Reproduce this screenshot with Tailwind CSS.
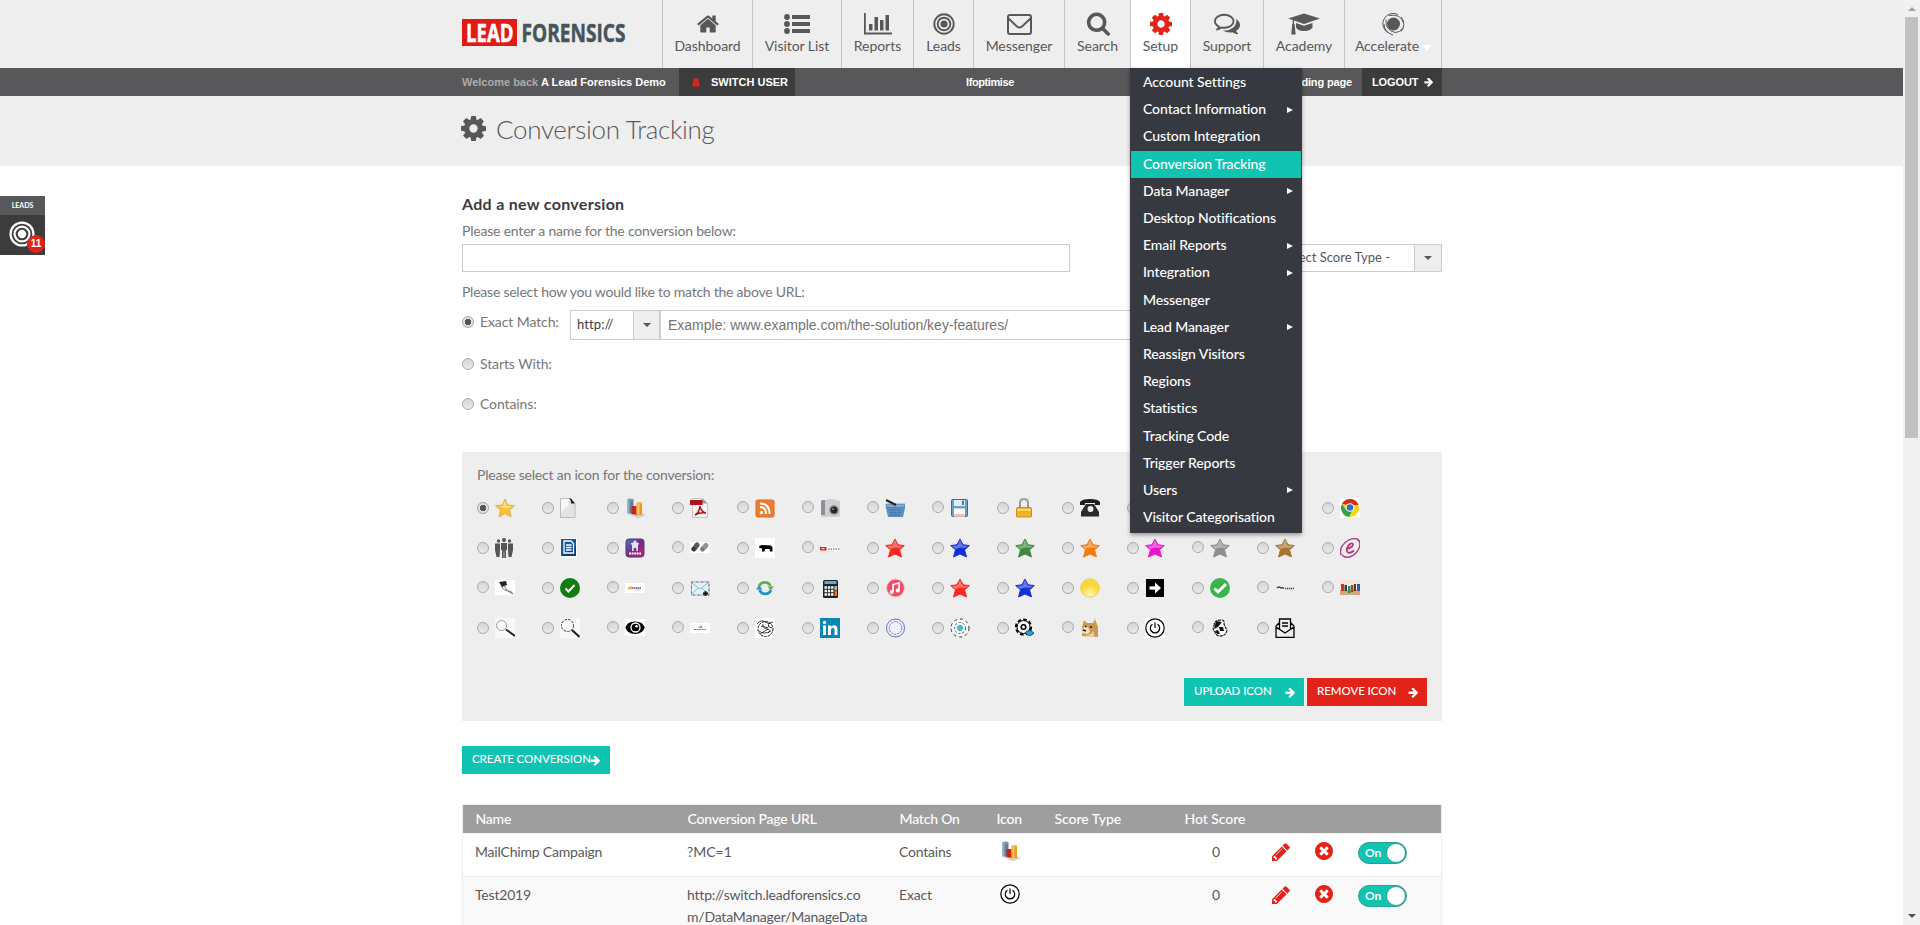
<!DOCTYPE html>
<html lang="en">
<head>
<meta charset="utf-8">
<title>Conversion Tracking</title>
<script src="https://cdn.jsdelivr.net/npm/@tailwindcss/browser@4"></script>
</head>
<body class="bg-white h-[925px] overflow-hidden font-['Lato',sans-serif] text-sm text-[#58585a]">
<svg class="hidden">
  <symbol id="cog" viewBox="128 128 1536 1536"><path d="M1152 896q0-106-75-181t-181-75-181 75-75 181 75 181 181 75 181-75 75-181zm512-109v222q0 12-8 23t-20 13l-185 28q-19 54-39 91 35 50 107 138 10 12 10 25t-9 23q-27 37-99 108t-94 71q-12 0-26-9l-138-108q-44 23-91 38-16 136-29 186-7 28-36 28h-222q-14 0-24.500-8.500t-11.500-21.500l-28-184q-49-16-90-37l-141 107q-10 9-25 9-14 0-25-11-126-114-165-168-7-10-7-23 0-12 8-23 15-21 51-66.500t54-70.500q-27-50-41-99l-183-27q-13-2-21-12.500t-8-23.500v-222q0-12 8-23t19-13l186-28q14-46 39-92-40-57-107-138-10-12-10-24 0-10 9-23 26-36 98.500-107.500t94.500-71.500q13 0 26 10l138 107q44-23 91-38 16-136 29-186 7-28 36-28h222q14 0 24.500 8.500t11.500 21.500l28 184q49 16 90 37l142-107q9-9 24-9 13 0 25 10 129 119 165 170 7 8 7 22 0 12-8 23-15 21-51 66.500t-54 70.500q26 50 41 98l183 28q13 2 21 12.500t8 23.500z"/></symbol>
  <symbol id="arrow" viewBox="64 250 1536 1500"><path d="M1600 960q0 54-37 91l-651 651q-39 37-91 37-51 0-90-37l-75-75q-38-38-38-91t38-91l293-293h-704q-52 0-84.500-37.500t-32.500-90.500v-128q0-53 32.500-90.500t84.500-37.500h704l-293-294q-38-36-38-90t38-90l75-75q38-38 90-38 53 0 91 38l651 651q37 35 37 90z"/></symbol>
  <symbol id="pencil" viewBox="128 128 1536 1536"><path d="M491 1536l91-91-235-235-91 91v107h128v128h107zm523-928q0-22-22-22-10 0-17 7l-542 542q-7 7-7 17 0 22 22 22 10 0 17-7l542-542q7-7 7-17zm-54-192l416 416-832 832h-416v-416zm683 96q0 53-37 90l-166 166-416-416 166-165q36-38 90-38 53 0 91 38l235 234q37 39 37 91z"/></symbol>
  <symbol id="times" viewBox="128 128 1536 1536"><path d="M1277 1122q0-26-19-45l-181-181 181-181q19-19 19-45 0-27-19-46l-90-90q-19-19-46-19-26 0-45 19l-181 181-181-181q-19-19-45-19-27 0-46 19l-90 90q-19 19-19 46 0 26 19 45l181 181-181 181q-19 19-19 45 0 27 19 46l90 90q19 19 46 19 26 0 45-19l181-181 181 181q19 19 45 19 27 0 46-19l90-90q19-19 19-46zm387-226q0 209-103 385.500t-279.500 279.500-385.500 103-385.500-103-279.500-279.500-103-385.500 103-385.500 279.500-279.500 385.500-103 385.500 103 279.500 279.500 103 385.500z"/></symbol>
  <symbol id="target" viewBox="0 0 22 22"><g fill="none" stroke="currentColor" stroke-width="1.900"><circle cx="11" cy="11" r="9.700"/><circle cx="11" cy="11" r="6.300"/></g><circle cx="11" cy="11" r="3.600" fill="currentColor"/></symbol>
  <symbol id="bars3d" viewBox="0 0 20 20"><path d="M2 15l8-2 10 4-7 3z" fill="#d5dbe3" stroke="#a9b4c2" stroke-width=".5"/><path d="M2.500 1.500h6v14.500l-6-1z" fill="#5f8298"/><path d="M2.500 1.500h2v14l-2-.500z" fill="#8fb0c4"/><ellipse cx="5.500" cy="1.700" rx="3" ry="1.100" fill="#7fa0b4"/><path d="M6.500 8h5v9l-5-1z" fill="#c8231a"/><path d="M11.500 5h5.500v12l-5.500 1z" fill="#f0961e"/><path d="M12.500 5.500h2v12h-2z" fill="#fbc860"/><ellipse cx="14.200" cy="5" rx="2.800" ry="1" fill="#f7b54a"/></symbol>
  <symbol id="power" viewBox="0 0 20 20"><path d="M0 0h20v20H0z" fill="#fff"/><g fill="none" stroke="#000" stroke-width="1.200"><circle cx="10" cy="10" r="9.200"/><path d="M7.500 6.200a4.700 4.700 0 1 0 5 0M10 4.500v5.500"/></g></symbol>
  <symbol id="star" viewBox="0 0 20 20"><path d="M10 1l3 5.800 6.300.8-4.800 4.300 2 7L10 16 3.500 19l2-7.200L.7 7.600 7 6.800z" stroke="currentColor" stroke-width="1" stroke-linejoin="round"/><path d="M10 1.500l2.500 6 5.500.6-3.500 2q-5-1.500-9 1L2 8l5.500-.6z" fill="#fff" opacity=".35"/></symbol>
</svg>

<div class="flex h-[925px] w-[1920px] overflow-hidden">
<main class="relative w-[1903px] h-[925px] overflow-hidden">
  <header class="bg-[#eee] h-[68px]">
    <div class="ml-[462px] w-[980px] flex h-full">
      <div class="w-[200px] pt-[19px]">
        <svg class="w-[170px] h-[28px] overflow-visible" viewBox="0 0 170 28" font-family="'Open Sans','Noto Sans',sans-serif" font-weight="700">
          <rect width="55" height="27" fill="#e31b18"/>
          <text x="4" y="22.500" font-size="25" fill="#fff" stroke="#fff" stroke-width=".5" textLength="47.500" lengthAdjust="spacingAndGlyphs">LEAD</text>
          <text x="59.500" y="22.500" font-size="25" fill="#475459" stroke="#475459" stroke-width=".5" textLength="104" lengthAdjust="spacingAndGlyphs">FORENSICS</text>
        </svg>
      </div>
      <nav class="flex text-[#58585a] tracking-[-0.05px] [&>a]:border-l [&>a]:border-[#c4c4c4] [&>a]:flex [&>a]:flex-col [&>a]:items-center [&>a]:pt-3 [&>a]:leading-5 [&_svg]:h-6">
        <a class="w-[90px]"><svg class="w-6" viewBox="0 0 1792 1792" fill="currentColor"><path d="M1472 992v480q0 26-19 45t-45 19h-384v-384h-256v384h-384q-26 0-45-19t-19-45v-480q0-1 .5-3t.5-3l575-474 575 474q1 2 1 6zm223-69l-62 74q-8 9-21 11h-3q-13 0-21-7l-692-577-692 577q-12 8-24 7-13-2-21-11l-62-74q-8-10-7-23.500t11-21.500l719-599q32-26 76-26t76 26l244 204v-195q0-14 9-23t23-9h192q14 0 23 9t9 23v408l219 182q10 8 11 21.500t-7 23.500z"/></svg><span>Dashboard</span></a>
        <a class="w-[89px]"><svg class="w-[26px]" viewBox="0 0 26 24" fill="currentColor"><circle cx="3" cy="5" r="2.900"/><circle cx="3" cy="12" r="2.900"/><circle cx="3" cy="19" r="2.900"/><path d="M8 3h18v4H8zM8 10h18v4H8zM8 17h18v4H8z"/></svg><span>Visitor List</span></a>
        <a class="w-[72px]"><svg class="w-7" viewBox="0 0 28 24" fill="currentColor"><path d="M0 1h1.800v19.500H28v2H0zM5 12h3.500v6.500H5zM10.500 5H14v13.500h-3.500zM16 8h3.500v10.500H16zM21.500 3H25v15.500h-3.500z"/></svg><span>Reports</span></a>
        <a class="w-[60px]"><svg class="w-[22px]"><use href="#target"/></svg><span>Leads</span></a>
        <a class="w-[91px]"><svg class="w-[25px]" viewBox="0 0 25 24" fill="none" stroke="currentColor" stroke-width="2"><rect x="1" y="3" width="23" height="19" rx="2"/><path d="M1.500 6.500l8.500 8q2.500 2 5 0l8.500-8"/></svg><span>Messenger</span></a>
        <a class="w-[66px]"><svg class="w-6" viewBox="0 120 1728 1664" fill="currentColor"><path d="M1216 832q0-185-131.500-316.500t-316.500-131.500-316.500 131.500-131.500 316.500 131.500 316.500 316.500 131.500 316.500-131.500 131.500-316.500zm512 832q0 52-38 90t-90 38q-54 0-90-38l-343-342q-179 124-399 124-143 0-273.500-55.500t-225-150-150-225-55.500-273.500 55.500-273.500 150-225 225-150 273.500-55.500 273.500 55.500 225 150 150 225 55.500 273.500q0 220-124 399l343 343q37 37 37 90z"/></svg><span>Search</span></a>
        <a class="w-[60px] bg-white"><svg class="w-[22px]" fill="#e2231a"><use href="#cog"/></svg><span>Setup</span></a>
        <a class="w-[73px]"><svg class="w-[26px]" viewBox="0 130 1792 1650" fill="currentColor"><path d="M704 384q-153 0-286 52t-211.500 141-78.500 191q0 82 53 158t149 132l97 56-35 84q34-20 62-39l44-31 53 10q78 14 153 14 153 0 286-52t211.500-141 78.500-191-78.500-191-211.500-141-286-52zm0-128q191 0 353.500 68.500t256.500 186.500 94 257-94 257-256.500 186.500-353.500 68.500q-86 0-176-16-124 88-278 128-36 9-86 16h-3q-11 0-20.500-8t-11.500-21q-1-3-1-6.500t.5-6.500 2-6l2.500-5 3.500-5.500 4-5 4.500-5 4-4.500q5-6 23-25t26-29.500 22.500-29 25-38.500 20.500-44q-124-72-195-177t-71-224q0-139 94-257t256.500-186.500 353.500-68.500zm822 1169q10 24 20.500 44t25 38.500 22.500 29 26 29.500 23 25q1 1 4 4.500t4.500 5 4 5 3.500 5.500l2.500 5 2 6 .5 6.500-1 6.500q-3 14-13 22t-22 7q-50-7-86-16-154-40-278-128-90 16-176 16-271 0-472-132 58 4 88 4 161 0 309-45t264-129q125-92 192-212t67-254q0-77-23-152 129 71 204 178t75 230q0 120-71 224.500t-195 176.500z"/></svg><span>Support</span></a>
        <a class="w-[81px]"><svg class="w-8" viewBox="0 0 32 24" fill="currentColor"><path d="M16 1.500L32 6.500 16 12 6 8.500v3q1.300 1 .8 2.500l.9 8.500H3.200L4.100 14q-.6-1.500.6-2.600V8L0 6.500zM8 11l8 2.700L24.500 11v4.500Q22 19 16 19t-8-3.500z"/></svg><span>Academy</span></a>
        <a class="w-[98px] border-r"><svg class="w-6" viewBox="0 0 24 24"><circle cx="12.500" cy="12" r="6.500" fill="currentColor"/><path d="M17 2.500A10.500 10.500 0 0 0 3 7 10 10 0 0 0 7 20.500M20 5a10.500 10.500 0 0 1 0 14.500M8 3.500Q20 1.500 22.500 11M5 7.500Q4 18 14 20.500q5 .5 8-5M3 12q0 8 9 11" fill="none" stroke="currentColor" stroke-width="1"/></svg>
          <span class="flex items-center gap-1"><span>Accelerate</span><i class="mt-1 border-x-[4px] border-t-[6px] border-x-transparent border-t-white"></i></span></a>
      </nav>
    </div>
  </header>

  <div class="h-7 bg-[#58585a] text-white font-bold text-[11px] leading-7 font-['Liberation_Sans',sans-serif]">
    <div class="ml-[462px] w-[980px] flex h-full">
      <div class="w-[217px]"><span class="text-[#acacac]">Welcome back</span> A Lead Forensics Demo</div>
      <div class="w-[116px] bg-[#3c3c3c] flex items-center pl-[13px]"><svg class="w-[8px] h-[9px] mr-[11px]" viewBox="0 0 8 10" fill="#e2231a"><circle cx="4" cy="2.500" r="2.500"/><path d="M0 8q0-4 2-4 2 1.500 4 0 2 0 2 4 0 1.500-1.500 1.500h-5Q0 9.500 0 8z"/></svg><span>SWITCH USER</span></div>
      <div class="flex-1 flex justify-between pl-[171px] pr-[10px] tracking-[-0.4px]"><span>lfoptimise</span><span class="tracking-[-0.15px]">landing page</span></div>
      <div class="w-[80px] bg-[#3c3c3c] flex items-center pl-[10px] gap-[6px] tracking-[-0.1px]"><span>LOGOUT</span><svg class="w-[9px] h-[9px]" fill="#fff"><use href="#arrow"/></svg></div>
    </div>
  </div>

  <div class="h-[70px] bg-[#eee]">
    <div class="ml-[461px] flex items-center h-[68px]">
      <svg class="w-[25px] h-[25px] mr-[10px] -mt-1" fill="#58585a"><use href="#cog"/></svg>
      <h1 class="text-[26px] font-light tracking-[-0.32px]">Conversion Tracking</h1>
    </div>
  </div>

  <section class="ml-[462px] w-[980px] text-[#777] tracking-[-0.2px]">
    <h2 class="pt-[27px] text-base leading-[22px] font-bold text-[#3c3c3c] tracking-[0.3px]">Add a new conversion</h2>
    <p class="mt-1.5 leading-5">Please enter a name for the conversion below:</p>
    <div class="mt-[3px] flex justify-between">
      <div class="w-[608px] h-7 border border-[#ccc]"></div>
      <div class="w-[180px] h-7 border border-[#ccc] flex text-[13px] leading-[25px] tracking-[0px] text-[#58585a]">
        <span class="flex-1 text-right pr-[24px]">- Select Score Type -</span>
        <span class="w-[27px] bg-[#eee] border-l border-[#ccc] flex items-center justify-center"><i class="border-x-[4px] border-t-[4px] border-x-transparent border-t-[#58585a]"></i></span>
      </div>
    </div>
    <p class="mt-[10px] leading-5 tracking-[-0.24px]">Please select how you would like to match the above URL:</p>
    <div class="mt-2 h-[30px] flex">
      <div class="w-[108px] flex items-center h-6 tracking-[-0.1px]"><i class="size-3 rounded-full border border-[#a3a3a3] bg-[radial-gradient(circle,#555_0_3px,#e2e2e2_3.5px)] mr-1.5"></i>Exact Match:</div>
      <div class="w-[90px] border border-[#ccc] flex text-[13px] leading-[26px] tracking-[0.1px] text-[#3c3c3c]">
        <span class="flex-1 pl-[6px]">http://</span>
        <span class="w-[26px] bg-[#eee] border-l border-[#ccc] flex items-center justify-center"><i class="border-x-[4px] border-t-[4px] border-x-transparent border-t-[#58585a]"></i></span>
      </div>
      <div class="flex-1 mr-[260px] border border-[#ccc] pl-[7px] leading-[29px] tracking-[0px] font-['Liberation_Sans',sans-serif] text-[#757575]">Example: www.example.com/the-solution/key-features/</div>
    </div>
    <div class="mt-[14px] h-5 flex items-center tracking-[-0.1px]"><i class="size-3 rounded-full border border-[#a9a9a9] bg-linear-to-b from-[#d6d6d6] to-[#e8e8e8] mr-1.5"></i>Starts With:</div>
    <div class="mt-5 h-5 flex items-center tracking-[-0.1px]"><i class="size-3 rounded-full border border-[#a9a9a9] bg-linear-to-b from-[#d6d6d6] to-[#e8e8e8] mr-1.5"></i>Contains:</div>

    <div class="mt-[38px] h-[269px] bg-[#eee] pl-[15px] pr-[15px]">
      <p class="pt-[13px] leading-5">Please select an icon for the conversion:</p>
      <div id="icons" class="mt-[3px] grid grid-cols-[repeat(14,65px)] auto-rows-[40px]"></div>
      <div class="mt-[30px] flex justify-end gap-[3px] text-white text-[11.5px] leading-[26px] font-medium tracking-[-0.05px]">
        <a class="w-[120px] h-7 bg-[#11c4b2] pl-[10px] pr-[9px] flex justify-between">UPLOAD ICON<svg class="w-[10px] h-[10px] mt-[10px]" fill="#fff"><use href="#arrow"/></svg></a>
        <a class="w-[120px] h-7 bg-[#e2231a] pl-[10px] pr-[9px] flex justify-between">REMOVE ICON<svg class="w-[10px] h-[10px] mt-[10px]" fill="#fff"><use href="#arrow"/></svg></a>
      </div>
    </div>

    <a class="mt-[25px] w-[148px] h-7 bg-[#11c4b2] pl-[10px] pr-[10px] flex justify-between text-white text-[11.5px] leading-[26px] font-medium tracking-[-0.05px] whitespace-nowrap"><span class="w-[118px]">CREATE CONVERSION</span><svg class="w-[10px] h-[10px] mt-[10px]" fill="#fff"><use href="#arrow"/></svg></a>

    <div class="mt-[30px] border border-[#eee] text-[#58585a] leading-[22px]">
      <div class="grid grid-cols-[212px_212px_97px_58px_130px_1fr] h-7 bg-[#9e9e9e] text-white font-medium leading-[27px] pl-[12.5px]">
        <span>Name</span><span>Conversion Page URL</span><span>Match On</span><span>Icon</span><span class="tracking-[-0.05px]">Score Type</span><span class="tracking-[-0.05px]">Hot Score</span>
      </div>
      <div class="grid grid-cols-[212px_212px_101px_54px_130px_82px_42px_43px_1fr] h-[43px] border-t border-[#eee] pl-3 pt-[7px]">
        <span>MailChimp Campaign</span><span class="tracking-[0px]">?MC=1</span><span>Contains</span>
        <svg class="size-5"><use href="#bars3d"/></svg><span></span><span class="pl-[28px]">0</span>
        <svg class="w-[18px] h-[18px] mt-0.5 ml-[6px]" fill="#e2231a"><use href="#pencil"/></svg>
        <svg class="w-[18px] h-[18px] ml-[7px] mt-px" fill="#e2231a"><use href="#times"/></svg>
        <span class="ml-[7px] w-[49px] h-[22px] rounded-full bg-[#11c4b2] border border-[#2f9e92] flex items-center justify-between text-white text-xs font-bold pl-1.5 mt-px">On<i class="size-[20px] rounded-full bg-white border border-[#2f9e92]"></i></span>
      </div>
      <div class="grid grid-cols-[212px_212px_101px_54px_130px_82px_42px_43px_1fr] h-[80px] border-t border-[#eee] bg-[#faf9fa] pl-3 pt-[7px]">
        <span>Test2019</span><span>http://switch.leadforensics.co<br>m/DataManager/ManageData</span><span>Exact</span>
        <svg class="size-5"><use href="#power"/></svg><span></span><span class="pl-[28px]">0</span>
        <svg class="w-[18px] h-[18px] mt-0.5 ml-[6px]" fill="#e2231a"><use href="#pencil"/></svg>
        <svg class="w-[18px] h-[18px] ml-[7px] mt-px" fill="#e2231a"><use href="#times"/></svg>
        <span class="ml-[7px] w-[49px] h-[22px] rounded-full bg-[#11c4b2] border border-[#2f9e92] flex items-center justify-between text-white text-xs font-bold pl-1.5 mt-px">On<i class="size-[20px] rounded-full bg-white border border-[#2f9e92]"></i></span>
      </div>
    </div>
  </section>

  <div class="absolute left-[1130px] top-[68px] w-[172px] h-[465px] bg-[#373940] shadow-[0_2px_4px_rgba(0,0,0,0.35)] p-px text-white font-medium">
    <ul id="menu" class="leading-[25px] tracking-[-0.08px]"></ul>
  </div>

  <aside class="absolute left-0 top-[196px] w-[45px] h-[59px] bg-[#3c3c3c] text-white text-center">
    <div class="bg-[#58585a] h-[19px] text-[7px] leading-[18px] font-bold">LEADS</div>
    <svg class="absolute left-[9px] top-[25px] w-[26px] h-[26px]"><use href="#target"/></svg>
    <b class="absolute left-[27px] top-[39px] size-[18px] rounded-full bg-[#e2231a] text-[10px] leading-[18px] font-['Liberation_Sans',sans-serif]">11</b>
  </aside>
</main>
<div class="w-[17px] h-full bg-[#f1f1f1] flex flex-col items-center">
  <i class="mt-[7px] border-x-[4px] border-b-[4px] border-x-transparent border-b-[#a3a3a3]"></i>
  <div class="mt-[6px] w-[13px] h-[421px] bg-[#c1c1c1]"></div>
  <i class="mt-auto mb-[7px] border-x-[4px] border-t-[4px] border-x-transparent border-t-[#505050]"></i>
</div>
</div>

<script>
const star = c => `<use href="#star" fill="${c}" color="${c}"/>`;
const white = (y, h) => `<rect y="${y}" width="20" height="${h}" fill="#fff"/>`;
const icons = [
 `<path d="M10 1l2.800 6 6.700.7-5 4.500 1.500 6.800-6-3.500L4 19l1.500-6.800-5-4.500L7.200 7z" fill="#fbc02d" stroke="#e8a33d" stroke-width=".8"/><path d="M10 3l2 5 5 .5-6 2-8-2L8 8z" fill="#fde08a"/>`,
 `<path d="M.5.5h10l4.500 5v14H.5z" fill="#e4e4e4" stroke="#a8a8a8" stroke-width=".7"/><path d="M1 1h8v6L1 14z" fill="#f7f7f7"/><path d="M9 .5h2l4 5H11q0-4-2-5z" fill="#222"/>`,
 `<use href="#bars3d"/>`,
 `<path d="M2.500.5h10l5 5v14h-15z" fill="#f4f4f4" stroke="#bbb" stroke-width=".8"/><path d="M12 .5v5h5.500z" fill="#9a9a9a"/><path d="M0 2h12.500v5H0z" fill="#b01218"/><path d="M5 17q4-2 5-9 1 6 6 7-6-1-11 2z" fill="none" stroke="#b01218" stroke-width="1.500"/>`,
 `<rect x="1" y="2" width="18" height="17" rx="1.500" fill="#ee7b31" stroke="#dd6a20"/><path d="M5 9q6 0 6 7M5 5.500q9.500 0 9.500 10.500" fill="none" stroke="#fff" stroke-width="2"/><circle cx="6.500" cy="14.500" r="1.700" fill="#fff"/>`,
 `<path d="M1 4q0-2 2-2h4l1-1h6l1 1q5 0 5 2v13q0 2-2 2H1z" fill="#cfcfd3"/><path d="M1 4q0-2 2-2h2v15H1z" fill="#8e8e96"/><circle cx="14" cy="12" r="5" fill="#9a9aa0"/><circle cx="14" cy="12" r="3.500" fill="#26262c"/><circle cx="13" cy="11" r="1" fill="#888"/>`,
 `<path d="M1 6h19v4l-2 9H3L1 10z" fill="#5b8fc4"/><path d="M1 6h19v3.500H1z" fill="#7fa9d0" stroke="#456f9a" stroke-width=".6"/><path d="M5 12h11M5.500 14.500h10M6 17h9" stroke="#2f5680" stroke-dasharray="1 1.300"/><path d="M1 2l10 5" stroke="#222" stroke-width="2"/>`,
 `<rect x="1.500" y="1.500" width="16" height="17" rx="1" fill="#6aa2c6" stroke="#39708f"/><path d="M4 2h11v6H4z" fill="#e3ecf2"/><path d="M4 10.500h11v8H4z" fill="#fff"/><path d="M4 16h11v2.500H4z" fill="#f2c4ae"/><path d="M12 2.500h2V7h-2z" fill="#4b7f9f"/>`,
 `<path d="M5 10V5q0-4 4-4t4 4v5" fill="none" stroke="#9b9b9b" stroke-width="2"/><rect x="1.500" y="9.500" width="15" height="9.500" rx="1" fill="#f0b323" stroke="#b77d0c" stroke-width=".8"/><path d="M2 11h14v2H2z" fill="#fbd869"/>`,
 `<path d="M0 7V4q2-3 10-3t10 3v3h-5V5H5v2z" fill="#1e1e1e"/><path d="M6 6h8l5 8v4.500H1V14z" fill="#2b2b2b"/><circle cx="10.500" cy="11" r="3" fill="#eee"/>`,
 ``,``,``,
 `${white(0,20)}<circle cx="10" cy="10" r="9" fill="#fdd516"/><path d="M2 6a9 9 0 0 1 16.500 1H10z" fill="#dd2a1d"/><path d="M2 6a9 9 0 0 0 7 13l3-6-6-1z" fill="#31a24c"/><circle cx="10" cy="9.500" r="4.200" fill="#fff"/><circle cx="10" cy="9.500" r="3.300" fill="#2d71c4"/>`,
 `<g fill="#555"><circle cx="9" cy="2" r="2"/><circle cx="3.500" cy="3" r="1.700"/><circle cx="14.500" cy="3" r="1.700"/><path d="M6 5h6v7h-1v8H9.300v-7h-.6v7H7v-8H6zM0 5.500h5V12l-.5 7H1.500L0 12zM13 5.500h5V12l-1.500 7h-3L13 12z"/></g>`,
 `<path d="M0 0h17v20H0z" fill="#fff"/><path d="M1 1h15v17H1z" fill="#0c3c7c"/><path d="M1 1h15v8L1 18z" fill="#1d6ab0" opacity=".6"/><path d="M4 3h7l2.500 2.500V15H4zM6 7h5.500M6 9.500h5.500M6 12h5.500" fill="none" stroke="#fff" stroke-width="1.300"/>`,
 `<linearGradient id="ga" x2="1" y2="1"><stop stop-color="#3f7fc0"/><stop offset=".5" stop-color="#7b2a8a"/><stop offset="1" stop-color="#d6246a"/></linearGradient><rect x="1" y="1" width="18" height="18" rx="3" fill="url(#ga)" stroke="#54306e"/><path d="M10 2l2.500 3H14v1.500h-1v6.500h-1.700v-3H8.700v3H7V6.500H6V5h1.500z" fill="#dfe3f2"/><path d="M4 15.500h12" stroke="#fff" stroke-width="1.800" stroke-dasharray="2 .6"/>`,
 `${white(4,11)}<g stroke-width="5" stroke-linecap="round"><path d="M4 11l3-4" stroke="#555c66"/><path d="M12.500 11l3.500-3.500" stroke="#8d949c"/></g><circle cx="3.500" cy="11" r="2" fill="#333"/><circle cx="12.500" cy="11.500" r="1.800" fill="#777"/>`,
 `${white(0,20)}<path d="M4 8l3-1 9 .5 1.500 2v4h-2.500l-.5-2.500H10L9.500 13.500H7L7 10.500 4.500 10z" fill="#000"/>`,
 `${white(9,4)}<rect y="9" width="6.500" height="3.500" fill="#d91f1f"/><path d="M1.500 10.700h3" stroke="#fff"/><path d="M8 11h12" stroke="#444" stroke-width="1" stroke-dasharray="1.500 1"/>`,
 star('#f9281c'),star('#1330d8'),star('#3f8a3f'),star('#f47a10'),star('#ee12cf'),star('#8e8e8e'),star('#a87432'),
 `<g fill="none" stroke="#b5387e"><path d="M1 17C-2 7 10-1 17 1c6 3 2 13-5 17-4 2-8 1-10-1" stroke-width="1.400"/><path d="M7 11q6-2 6-4.500-.5-2-3-.5-4 4-3 7.500 2 3 7-1" stroke-width="1.800"/></g>`,
 `${white(2,15)}<path d="M4 4l7-1 1 4-5 2z" fill="#222"/><path d="M6 8q3 5 7 5t5 3M9 7q2 6 9 9" stroke="#777" fill="none"/>`,
 `<circle cx="10" cy="10" r="10" fill="#107c10"/><path d="M5.500 10.500l3 3 6-6.500" fill="none" stroke="#fff" stroke-width="2"/>`,
 `${white(5,10)}<path d="M2 10l5-2-1 3z" fill="#f2a61f"/><path d="M3 10.500h4" stroke="#e8b02d" stroke-width="1.500"/><path d="M7 10h9" stroke="#555" stroke-width="1.500" stroke-dasharray="1.500 .5"/><path d="M9 12h6" stroke="#bbb" stroke-width=".8"/>`,
 `<rect x="1.500" y="4" width="17.500" height="13" fill="#dff3f6" stroke="#8fb3cc"/><rect x="1.500" y="4" width="17.500" height="13" fill="none" stroke="#b0405a" stroke-dasharray="1.500 3.500"/><path d="M2 5l8 6 8-6M2 16l6-6M18 16l-6-6" fill="none" stroke="#79aeb8" stroke-width=".8"/><path d="M13 15.500h5M15.500 13v5" stroke="#111" stroke-width="1.800"/>`,
 `<path d="M4 8.500A6.200 6.200 0 0 1 15.500 8" fill="none" stroke="#62b04a" stroke-width="2.600"/><path d="M12.500 8.500h6.500l-3.500 4z" fill="#62b04a"/><path d="M16 12A6.200 6.200 0 0 1 4.500 12" fill="none" stroke="#1e8fd0" stroke-width="2.600"/><path d="M1 11.500h6.500l-3.500-4z" fill="#1e8fd0"/>`,
 `<rect x="3" y="2" width="15" height="18" rx="1.500" fill="#222"/><path d="M4.500 3h12v3h-12z" fill="#4ab1e6"/><path d="M4.500 9.500h9M4.500 13h9M4.500 16.500h9" stroke="#fff" stroke-width="2.400" stroke-dasharray="2.400 .9"/><path d="M14.500 8h2.500v4h-2.500z" fill="#bbb"/><path d="M14.500 12.500h2.500v5.500h-2.500z" fill="#f07818"/>`,
 `<circle cx="10.500" cy="10" r="9" fill="#ee4d6b" stroke="#f7c9d2"/><path d="M8 14V6.500l6-1.500v7.500" fill="none" stroke="#fff" stroke-width="1.600"/><circle cx="6.700" cy="14" r="2" fill="#fff"/><circle cx="12.700" cy="12.500" r="2" fill="#fff"/>`,
 star('#f9281c'),star('#1330d8'),
 `<radialGradient id="gb" cy=".85"><stop stop-color="#fff6b8"/><stop offset="1" stop-color="#f8d93c"/></radialGradient><circle cx="10" cy="10" r="9.300" fill="url(#gb)" stroke="#e8c840" stroke-width=".8"/>`,
 `<rect x="1" y="1" width="18" height="18" fill="#000"/><path d="M4.500 10h8" stroke="#fff" stroke-width="3.200"/><path d="M10 4.500l6 5.500-6 5.500z" fill="#fff"/>`,
 `<circle cx="10" cy="10" r="10" fill="#3bb54a"/><path d="M4.500 10.500l3.500 3.500 8-8" fill="none" stroke="#fff" stroke-width="3"/>`,
 `<path d="M2 10q2-2 4 0h3" stroke="#444" fill="none" stroke-width="1.300"/><path d="M10 10.500h9" stroke="#444" stroke-width="1.500" stroke-dasharray="1.300 .7"/>`,
 `${white(2,15)}<path d="M0 2h20v6H0z" fill="#f3e6d8"/><path d="M0 12h20v5H0z" fill="#d3a77c"/><path d="M1 6h3v7H1zM11 7h2.500v7H11z" fill="#c4352b"/><path d="M4.500 7H7v6H4.500zM14 6h2v7h-2z" fill="#44362c"/><path d="M8 8h2.500v7H8z" fill="#1d9458"/><path d="M17 6h3v7h-3z" fill="#3556a0"/>`,
 `<rect width="20" height="20" fill="#f8f8f8"/><circle cx="6.500" cy="7.500" r="5" fill="#fff" stroke="#999"/><path d="M11 11.500l9 6.500" stroke="#222" stroke-width="2"/>`,
 `<rect width="20" height="20" fill="#f8f8f8"/><circle cx="7.500" cy="7.500" r="6" fill="#fff" stroke="#333" stroke-dasharray="2.500 1"/><path d="M12 12l7.500 7" stroke="#222" stroke-width="2.200"/>`,
 `${white(1,17)}<path d="M.5 9.500Q2 3.500 10 3.500T19.700 9.500Q18 16 10 16T.5 9.500z" fill="#000"/><circle cx="10.500" cy="9.500" r="4.500" fill="none" stroke="#fff" stroke-width="1.300"/><circle cx="11.500" cy="8.300" r="1.300" fill="#fff"/>`,
 `${white(5,10)}<path d="M8 10l3-3 2 3z" fill="#7fa9cc"/><path d="M4 11.500h12" stroke="#4f83b4" stroke-dasharray="2 .6"/>`,
 `${white(0,20)}<g fill="none" stroke="#111"><circle cx="10.500" cy="11" r="7.500" stroke-dasharray="2.500 1"/><path d="M2 6q4-5 8-2t8 0M6 9q2-2 4 0t4-1M4 13q5 4 12 0M8 6q-1 4 4 5t1 4M14 5q-2 4 3 5M5 16l8-5" stroke-width=".8"/></g>`,
 `<rect width="20" height="20" fill="#0a86b5"/><path d="M3 7.500h3V17H3zM8 7.500h3v1.300Q12 7.300 14 7.300q3.500 0 3.500 4V17h-3v-5q0-2.200-1.600-2.200Q11 9.800 11 12v5H8z" fill="#fff"/><circle cx="4.500" cy="4.500" r="1.700" fill="#fff"/>`,
 `<g fill="#f1f1fb" stroke="#6670b8"><circle cx="10.500" cy="10" r="9"/><circle cx="10.500" cy="10" r="6.300" stroke-dasharray="2 1"/></g>`,
 `<circle cx="10" cy="10" r="9" fill="#f3fafa" stroke="#333" stroke-dasharray="3 3"/><circle cx="10" cy="10" r="5.500" fill="none" stroke="#355" stroke-dasharray="2 2"/><circle cx="10" cy="10" r="2.700" fill="#3cc3cf" stroke="#177" stroke-dasharray="1 1"/>`,
 `<circle cx="8.500" cy="9" r="7.500" fill="none" stroke="#000" stroke-width="2.200" stroke-dasharray="3.500 2.300"/><circle cx="8.500" cy="9" r="6.500" fill="#f4f4f4" stroke="#000"/><circle cx="8.500" cy="9" r="2.300" fill="none" stroke="#000" stroke-width="1.500"/><path d="M10 15q4-5 9 0-4 5-9 0z" fill="#1aa7ea" stroke="#000" stroke-width=".6"/>`,
 `<path d="M2 18V9L4 2l3 3h6l2-4 3 8v10z" fill="#c99a52"/><path d="M3 10q4-3 6 1t-2 5l-5-1z" fill="#f1e2c2"/><path d="M3 12l3 1M5 8.500h1.500M10 9h2" stroke="#222" stroke-width="1.500"/><path d="M5 18q5-1 9-5v6H5z" fill="#e6cd9c"/>`,
 `<use href="#power"/>`,
 `<path d="M4 8q0-6 7-6 4 0 3 4 1 3 3 6-1 6-7 6-4 0-5-4-3-2-1-6z" fill="#fafafa" stroke="#111" stroke-width="1.100" stroke-dasharray="3 .8"/><path d="M6 3l6 1-4 5-4 2zM9 9h4l1 4h-4zM5 13l3-1 2 4H7z" fill="#111"/>`,
 `<g fill="none" stroke="#000" stroke-width="1.300"><path d="M1 8v11.300h18V8M1 9l9 6 9-6M1 8l3-3M19 8l-3-3M4.500 11V1h11v10" /><path d="M7 5h6M7 8h6"/></g>`
];
const raised = [4,5,6,7,17,19,25,28,30,40,41,44,45,51,53];
document.getElementById('icons').innerHTML = icons.map((s, i) => `<label class="flex items-center"><i class="${i === 0
  ? 'size-3 rounded-full border border-[#a3a3a3] bg-[radial-gradient(circle,#555_0_3px,#e2e2e2_3.5px)] mr-1.5'
  : raised.includes(i) ? 'size-3 rounded-full border border-[#a9a9a9] bg-linear-to-b from-[#d6d6d6] to-[#e8e8e8] mr-1.5 -translate-y-px'
  : 'size-3 rounded-full border border-[#a9a9a9] bg-linear-to-b from-[#d6d6d6] to-[#e8e8e8] mr-1.5'}"></i><svg class="size-5" viewBox="0 0 20 20">${s}</svg></label>`).join('');

const menu = [['Account Settings'],['Contact Information',1],['Custom Integration'],['Conversion Tracking'],['Data Manager',1],['Desktop Notifications'],['Email Reports',1],['Integration',1],['Messenger'],['Lead Manager',1],['Reassign Visitors'],['Regions'],['Statistics'],['Tracking Code'],['Trigger Reports'],['Users',1],['Visitor Categorisation']];
document.getElementById('menu').innerHTML = menu.map(([t, sub]) => `<li class="${t === 'Conversion Tracking'
  ? 'h-[27.2px] pl-3 pr-2 pb-0.5 flex items-center justify-between bg-[#11c4b2]'
  : 'h-[27.2px] pl-3 pr-2 pb-0.5 flex items-center justify-between'}"><span>${t}</span>${sub ? '<i class="mt-0.5 border-y-[3.5px] border-l-[6px] border-y-transparent border-l-white"></i>' : ''}</li>`).join('');
</script>
</body>
</html>
